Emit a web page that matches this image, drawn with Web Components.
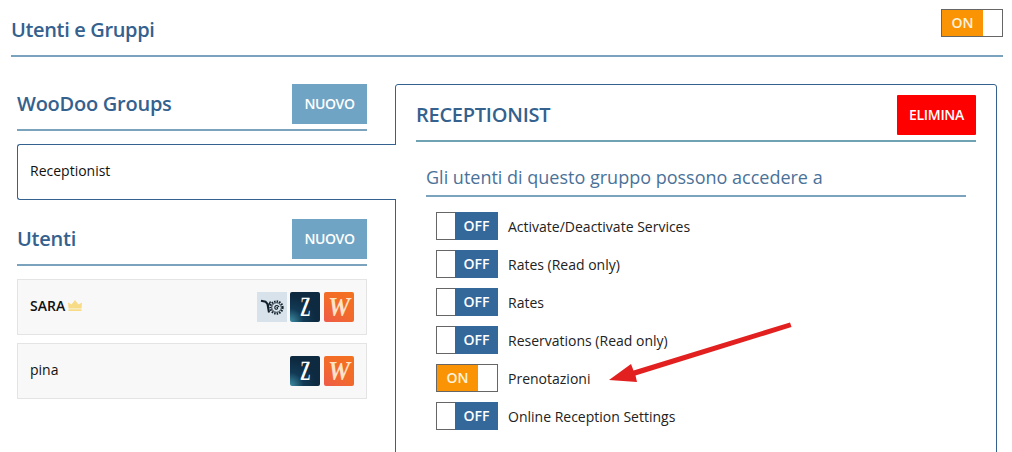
<!DOCTYPE html>
<html>
<head>
<meta charset="utf-8">
<style>
  html, body { margin: 0; background: #fff; }
  body { font-family: "Open Sans", sans-serif; color: #111; overflow: hidden; height: 452px; }
</style>
</head>
<body>
<users-page>
  <on-off slot="action" on></on-off>
  <section-head slot="left" heading="WooDoo Groups" button="NUOVO"></section-head>
  <group-tab slot="left">Receptionist</group-tab>
  <section-head slot="left" heading="Utenti" button="NUOVO" style="margin-top:19px"></section-head>
  <user-row slot="left" style="margin-top:13px" icons="v z w"><b>SARA</b> <crown-icon></crown-icon></user-row>
  <user-row slot="left" style="margin-top:8px" icons="z w">pina</user-row>
  <group-panel slot="right" heading="RECEPTIONIST">
    <perm-row label="Activate/Deactivate Services"></perm-row>
    <perm-row label="Rates (Read only)"></perm-row>
    <perm-row label="Rates"></perm-row>
    <perm-row label="Reservations (Read only)"></perm-row>
    <perm-row label="Prenotazioni" on></perm-row>
    <perm-row label="Online Reception Settings"></perm-row>
  </group-panel>
</users-page>

<script>
function shadow(el, html) {
  el.attachShadow({mode: 'open'}).innerHTML = html;
}

const SWITCH_CSS = `
  .sw { display: flex; flex: none; width: 62px; height: 28px; box-sizing: border-box; border: 1px solid #666; background: #fff; color: #fff; font-size: 14px; font-weight: 600; }
  .sw div { display: flex; align-items: center; justify-content: center; padding-bottom: 2px; box-sizing: border-box; }
  .off { margin: -1px -1px -1px 18px; width: 43px; background: #34689b; }
  .on { width: 41px; background: #fb9405; color: #fff3dc; }
`;

customElements.define('users-page', class extends HTMLElement {
  connectedCallback() {
    shadow(this, `
      <style>
        :host { display: block; position: relative; height: 452px; overflow: hidden; }
        header {
          display: flex; justify-content: space-between; align-items: flex-start;
          margin: 0 9px 0 11px; height: 57px; box-sizing: border-box; padding-top: 9px;
          border-bottom: 2px solid #7ba3bd;
        }
        h1 { margin: 7px 0 0; font-size: 20px; line-height: 27px; font-weight: 600; color: #34618e; letter-spacing: -.35px; }
        main { display: flex; padding: 27px 15px 0 17px; align-items: flex-start; }
        #left { width: 350px; flex: none; display: flex; flex-direction: column; }
        #right { margin-left: 28px; flex: 1; }
        svg { position: absolute; left: 0; top: 0; pointer-events: none; }
      </style>
      <header><h1>Utenti e Gruppi</h1><slot name="action"></slot></header>
      <main>
        <div id="left"><slot name="left"></slot></div>
        <div id="right"><slot name="right"></slot></div>
      </main>
      <svg width="1012" height="452" viewBox="0 0 1012 452">
        <path d="M609 380 L631 364 L633.500 370.500 L790 322.500 L791.500 327 L635.500 375.500 L637 382 Z" fill="#e2201f"/>
      </svg>`);
  }
});

customElements.define('on-off', class extends HTMLElement {
  connectedCallback() {
    const on = this.hasAttribute('on');
    shadow(this, `
      <style>:host { display: block; flex: none; } ${SWITCH_CSS}</style>
      <div class="sw">${on ? '<div class="on">ON</div>' : '<div class="off">OFF</div>'}</div>`);
  }
});

customElements.define('section-head', class extends HTMLElement {
  connectedCallback() {
    shadow(this, `
      <style>
        :host { display: flex; justify-content: space-between; height: 45px; border-bottom: 2px solid #7ba3bd; }
        h2 { margin: 0; height: 40px; line-height: 39px; font-size: 20px; font-weight: 600; color: #34618e; letter-spacing: -.25px; }
        button { border: 0; width: 75px; height: 40px; background: #6fa4c4; color: #fff; font: 600 14px "Open Sans", sans-serif; letter-spacing: -.4px; padding: 0 0 1px; }
      </style>
      <h2>${this.getAttribute('heading')}</h2><button>${this.getAttribute('button')}</button>`);
  }
});

customElements.define('group-tab', class extends HTMLElement {
  connectedCallback() {
    shadow(this, `
      <style>
        :host {
          display: flex; align-items: center; position: relative; z-index: 1;
          margin-top: 13px; width: 379px; height: 56px; box-sizing: border-box; padding: 0 0 3px 12px;
          border: 1px solid #34618e; border-right: 0; border-radius: 3px 0 0 3px;
          background: #fff; font-size: 14px;
        }
      </style><slot></slot>`);
  }
});

customElements.define('crown-icon', class extends HTMLElement {
  connectedCallback() {
    shadow(this, `
      <style>:host { display: inline-block; width: 14px; height: 11px; }</style>
      <svg width="14" height="11" viewBox="0 0 14 11" style="display:block">
        <path d="M0 2.500 L3.500 4.500 L7 0 L10.500 4.500 L14 2.500 L13.500 8.500 H0.500 Z M0.500 9.300 H13.500 V11 H0.500 Z" fill="#f8dc85"/>
      </svg>`);
  }
});

const ICONS = {
  v: `<div class="ic v"><svg width="30" height="30" viewBox="0 0 30 30">
        <path d="M4 8.800 L8.500 9.600 L10.500 12 L12 20.500" fill="none" stroke="#12202c" stroke-width="2.100"/>
        <path d="M13.500 9.500 L11 14.500" fill="none" stroke="#12202c" stroke-width="1.500"/>
        <circle cx="19.500" cy="15.500" r="6.200" fill="none" stroke="#12202c" stroke-width="1.900" stroke-dasharray="1.500 1.100"/>
        <circle cx="19.500" cy="15.500" r="4.800" fill="none" stroke="#12202c" stroke-width=".9"/>
        <path d="M19.500 15.500 C21 14.800 21 17 19.500 17.300 C17.800 17.500 17 15 18.800 13.700 C20 13.200 21.500 13.700 22 15" fill="none" stroke="#12202c" stroke-width="1.100"/>
      </svg></div>`,
  z: `<div class="ic z"><span>Z</span></div>`,
  w: `<div class="ic w"><span>W</span></div>`,
};

customElements.define('user-row', class extends HTMLElement {
  connectedCallback() {
    const icons = this.getAttribute('icons').split(' ').map((k) => ICONS[k]).join('');
    shadow(this, `
      <style>
        :host {
          display: flex; align-items: center; justify-content: space-between;
          height: 56px; box-sizing: border-box; padding: 0 12px;
          background: #f8f8f8; border: 1px solid #e4e4e4; font-size: 14px;
        }
        .name { display: flex; align-items: center; gap: 3px; margin-top: -3px; }
        ::slotted(b) { font-weight: 600; }
        .icons { display: flex; gap: 3px; }
        .ic {
          width: 30px; height: 30px; border-radius: 2px; display: flex; align-items: center; justify-content: center;
          font: 700 28px/30px "Liberation Serif", serif; color: #fff; overflow: hidden;
        }
        .ic span { display: block; }
        .ic svg { display: block; }
        .ic.v { background: #d7e2ea; border-radius: 0; }
        .ic.z { background: radial-gradient(circle at 0 100%, #3f8fa5 0, #123a55 32%, #0d2a40 62%); }
        .ic.z span { transform: scaleX(.55) skewX(-3deg); }
        .ic.w { margin-left: 1px; background: linear-gradient(35deg, #ee5a4a 0, #f26a2c 45%, #f4711f 100%); color: #fde3c8; }
        .ic.w span { font-style: italic; font-size: 27px; transform: scaleX(.92); }
      </style>
      <div class="name"><slot></slot></div><div class="icons">${icons}</div>`);
  }
});

customElements.define('group-panel', class extends HTMLElement {
  connectedCallback() {
    shadow(this, `
      <style>
        :host {
          display: block; box-sizing: border-box; height: 400px; padding: 10px 20px 0;
          border: 1px solid #34618e; border-radius: 3px; background: #fff;
        }
        .top {
          display: flex; justify-content: space-between;
          height: 45px; border-bottom: 2px solid #6fa3b4;
        }
        h2 { margin: 0; height: 39px; line-height: 39px; font-size: 20px; font-weight: 600; color: #34618e; letter-spacing: -.25px; }
        button { border: 0; width: 79px; height: 40px; background: #f00; color: #fff; font: 600 14px "Open Sans", sans-serif; letter-spacing: -.3px; padding: 0 0 1px; border-radius: 1px; }
        h3 { margin: 20px 10px 0; font-size: 18px; font-weight: 400; line-height: 30px; color: #4a7299; padding-bottom: 3px; border-bottom: 2px solid #7ba3bd; }
        .list { display: flex; flex-direction: column; gap: 10px; padding: 15px 20px 0; }
      </style>
      <div class="top"><h2>${this.getAttribute('heading')}</h2><button>ELIMINA</button></div>
      <h3>Gli utenti di questo gruppo possono accedere a</h3>
      <div class="list"><slot></slot></div>`);
  }
});

customElements.define('perm-row', class extends HTMLElement {
  connectedCallback() {
    const on = this.hasAttribute('on');
    shadow(this, `
      <style>
        :host { display: flex; align-items: center; gap: 10px; font-size: 14px; color: #222; }
        span { margin-top: 1px; }
        ${SWITCH_CSS}
      </style>
      <div class="sw">${on ? '<div class="on">ON</div>' : '<div class="off">OFF</div>'}</div>
      <span>${this.getAttribute('label')}</span>`);
  }
});
</script>
</body>
</html>
